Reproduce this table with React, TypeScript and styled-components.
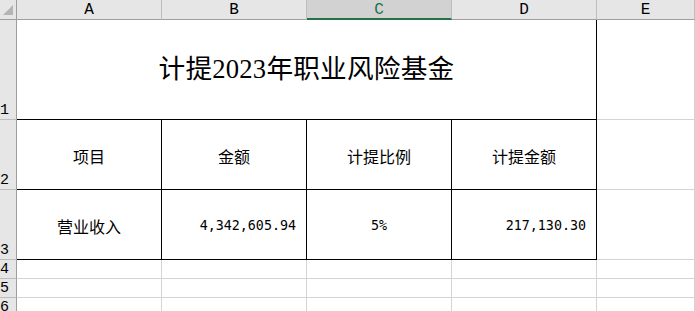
import { Fragment } from "react";
import styled, { createGlobalStyle } from "styled-components";

const GlobalStyle = createGlobalStyle`
  html, body {
    margin: 0;
    padding: 0;
    background: #ffffff;
    overflow: hidden;
  }
`;

const GRID = "#d4d4d4";
const HEAD_BG = "#e6e6e6";
const HEAD_EDGE = "#9e9e9e";
const HEAD_SEP = "#bdbdbd";
const EXCEL_GREEN = "#217346";

const Sheet = styled.div`
  display: grid;
  grid-template-columns: 17px repeat(4, 145px) 1fr;
  grid-template-rows: 20px 100px 70px 70px 19px 19px 19px;
  width: 695px;
  height: 311px;
  overflow: hidden;
  font-family: "Noto Sans CJK SC", sans-serif;
  color: #000000;
`;

const Corner = styled.div`
  box-sizing: border-box;
  background: ${HEAD_BG};
  border-right: 1px solid ${HEAD_EDGE};
  border-bottom: 1px solid ${HEAD_EDGE};
  display: flex;
  align-items: flex-end;
  justify-content: flex-end;
  padding: 0 3px 4px 0;

  &::after {
    content: "";
    width: 0;
    height: 0;
    border-left: 10px solid transparent;
    border-bottom: 10px solid #b4b4b4;
  }
`;

const ColHeader = styled.div<{ $selected?: boolean }>`
  box-sizing: border-box;
  display: flex;
  align-items: center;
  justify-content: center;
  background: ${(p) => (p.$selected ? "#d2d2d2" : HEAD_BG)};
  border-right: 1px solid ${HEAD_SEP};
  border-bottom: ${(p) => (p.$selected ? `2px solid ${EXCEL_GREEN}` : `1px solid ${HEAD_EDGE}`)};
  color: ${(p) => (p.$selected ? EXCEL_GREEN : "#000000")};
  font-family: "Liberation Mono", monospace;
  font-size: 16px;
  line-height: 1;
  padding-top: ${(p) => (p.$selected ? "2px" : "1px")};
`;

const RowHeader = styled.div`
  box-sizing: border-box;
  display: flex;
  align-items: flex-end;
  justify-content: flex-start;
  background: ${HEAD_BG};
  border-right: 1px solid ${HEAD_EDGE};
  border-bottom: 1px solid ${HEAD_SEP};
  font-family: "Liberation Mono", monospace;
  font-size: 15px;
  line-height: 15px;
  padding-bottom: 1px;
`;

const Cell = styled.div<{
  $align?: "left" | "center" | "right";
  $right?: boolean;
  $bottom?: boolean;
  $span?: number;
}>`
  box-sizing: border-box;
  display: flex;
  align-items: center;
  justify-content: ${(p) =>
    p.$align === "right" ? "flex-end" : p.$align === "left" ? "flex-start" : "center"};
  grid-column: ${(p) => (p.$span ? `span ${p.$span}` : "auto")};
  border-right: 1px solid ${(p) => (p.$right ? "#000000" : GRID)};
  border-bottom: 1px solid ${(p) => (p.$bottom ? "#000000" : GRID)};
  padding: ${(p) => (p.$align === "right" ? "3px 10px 0 0" : "3px 0 0 0")};
  font-size: 16px;
  white-space: nowrap;
  overflow: hidden;
`;

const Title = styled.span`
  font-family: "Liberation Serif", "Noto Sans CJK SC", serif;
  font-size: 26.67px;
  line-height: 1;
  margin-top: -3px;
  letter-spacing: 0.2px;
`;

const Label = styled.span`
  font-family: "Noto Sans CJK SC", sans-serif;
  font-size: 16px;
  line-height: 1;
`;

const Amount = styled.span`
  font-family: "DejaVu Sans Mono", monospace;
  font-size: 13.33px;
  line-height: 1;
`;

const columns = ["A", "B", "C", "D", "E"];

type Row = { label: string; amount: string; rate: string; accrued: string };

const header = ["项目", "金额", "计提比例", "计提金额"];
const data: Row[] = [
  { label: "营业收入", amount: "4,342,605.94", rate: "5%", accrued: "217,130.30" },
];

export default function App() {
  return (
    <>
      <GlobalStyle />
      <Sheet>
        <Corner />
        {columns.map((c) => (
          <ColHeader key={c} $selected={c === "C"}>
            {c}
          </ColHeader>
        ))}

        <RowHeader>1</RowHeader>
        <Cell $span={4} $right $bottom>
          <Title>计提2023年职业风险基金</Title>
        </Cell>
        <Cell />

        <RowHeader>2</RowHeader>
        {header.map((h) => (
          <Cell key={h} $right $bottom>
            <Label>{h}</Label>
          </Cell>
        ))}
        <Cell />

        {data.map((r, i) => (
          <Fragment key={r.label}>
            <RowHeader>{i + 3}</RowHeader>
            <Cell $right $bottom>
              <Label>{r.label}</Label>
            </Cell>
            <Cell $right $bottom $align="right">
              <Amount>{r.amount}</Amount>
            </Cell>
            <Cell $right $bottom>
              <Amount>{r.rate}</Amount>
            </Cell>
            <Cell $right $bottom $align="right">
              <Amount>{r.accrued}</Amount>
            </Cell>
            <Cell />
          </Fragment>
        ))}

        {[4, 5, 6].map((n) => (
          <Fragment key={n}>
            <RowHeader>{n}</RowHeader>
            {columns.map((c) => (
              <Cell key={c} />
            ))}
          </Fragment>
        ))}
      </Sheet>
    </>
  );
}
